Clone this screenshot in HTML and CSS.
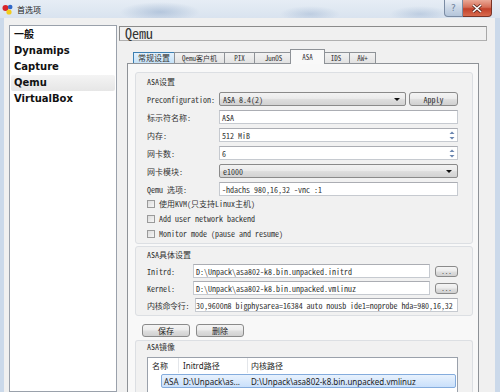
FILE: index.html
```html
<!DOCTYPE html>
<html>
<head>
<meta charset="utf-8">
<link rel="stylesheet" href="styles.css">
</head>
<body>
<div class="window">
  <div class="titlebar">
    <svg class="app-icon" width="12" height="12" viewBox="0 0 12 12">
      <circle cx="3.5" cy="5" r="3" fill="#d8262a"/>
      <circle cx="8.2" cy="4" r="2.3" fill="#2f67c9"/>
      <circle cx="7" cy="9" r="2.6" fill="#f3cc1c"/>
    </svg>
    <span class="title">首选项</span>
    <div class="caption">
      <div class="cap-help">?</div>
      <div class="cap-close">
        <svg width="12" height="9" viewBox="0 0 12 9"><path d="M2 1 L10 8 M10 1 L2 8" stroke="#5a2a22" stroke-width="3"/><path d="M2 1 L10 8 M10 1 L2 8" stroke="#fff" stroke-width="1.6"/></svg>
      </div>
    </div>
  </div>
  <div class="frame">
    <ul class="nav">
      <li>一般</li>
      <li>Dynamips</li>
      <li>Capture</li>
      <li class="sel">Qemu</li>
      <li>VirtualBox</li>
    </ul>
    <div class="main">
      <div class="header">Qemu</div>
      <div class="tabs">
        <div class="tabbar">
          <div class="tab hover w1">常规设置</div>
          <div class="tab w2">Qemu客户机</div>
          <div class="tab w3">PIX</div>
          <div class="tab w4">JunOS</div>
          <div class="tab active">ASA</div>
          <div class="tab w6">IDS</div>
          <div class="tab w7">AW+</div>
        </div>
        <div class="pane">
          <div class="group g1">
            <div class="gtitle">ASA设置</div>
            <div class="row first">
              <span class="lbl">Preconfiguration:</span>
              <div class="combo narrow"><span>ASA 8.4(2)</span><i class="arrow"></i></div>
              <div class="btn apply">Apply</div>
            </div>
            <div class="row">
              <span class="lbl">标示符名称:</span>
              <div class="field">ASA</div>
            </div>
            <div class="row">
              <span class="lbl">内存:</span>
              <div class="field spin">512 MiB<span class="spinner"><svg width="8" height="11" viewBox="0 0 8 11"><path d="M1.5 4 L4 1.5 L6.5 4 Z" fill="#6a86b0"/><path d="M1.5 7 L4 9.5 L6.5 7 Z" fill="#6a86b0"/></svg></span></div>
            </div>
            <div class="row">
              <span class="lbl">网卡数:</span>
              <div class="field spin">6<span class="spinner"><svg width="8" height="11" viewBox="0 0 8 11"><path d="M1.5 4 L4 1.5 L6.5 4 Z" fill="#6a86b0"/><path d="M1.5 7 L4 9.5 L6.5 7 Z" fill="#6a86b0"/></svg></span></div>
            </div>
            <div class="row">
              <span class="lbl">网卡模块:</span>
              <div class="combo"><span>e1000</span><i class="arrow"></i></div>
            </div>
            <div class="row">
              <span class="lbl">Qemu 选项:</span>
              <div class="field">-hdachs 980,16,32 -vnc :1</div>
            </div>
            <div class="check"><span class="box"></span>使用KVM(只支持Linux主机)</div>
            <div class="check"><span class="box"></span>Add user network backend</div>
            <div class="check"><span class="box"></span>Monitor mode (pause and resume)</div>
          </div>
          <div class="group g2">
            <div class="gtitle">ASA具体设置</div>
            <div class="row r2">
              <span class="lbl2">Initrd:</span>
              <div class="field">D:\Unpack\asa802-k8.bin.unpacked.initrd</div>
              <div class="btn dots">...</div>
            </div>
            <div class="row r2">
              <span class="lbl2">Kernel:</span>
              <div class="field">D:\Unpack\asa802-k8.bin.unpacked.vmlinuz</div>
              <div class="btn dots">...</div>
            </div>
            <div class="row r2">
              <span class="lbl3">内核命令行:</span>
              <div class="field tight">30,9600n8 bigphysarea=16384 auto nousb ide1=noprobe hda=980,16,32</div>
            </div>
          </div>
          <div class="buttons">
            <div class="btn big">保存</div>
            <div class="btn big">删除</div>
          </div>
          <div class="group g3">
            <div class="gtitle">ASA镜像</div>
            <div class="table">
              <div class="thead">
                <span class="c1">名称</span>
                <span class="c2">Initrd路径</span>
                <span class="c3">内核路径</span>
              </div>
              <div class="trow">
                <span class="c1">ASA</span>
                <span class="c2">D:\Unpack\as...</span>
                <span class="c3">D:\Unpack\asa802-k8.bin.unpacked.vmlinuz</span>
              </div>
            </div>
          </div>
        </div>
      </div>
    </div>
  </div>
</div>
</body>
</html>
```
FILE: styles.css
```css
* { box-sizing: border-box; }
html, body { margin: 0; padding: 0; }
body {
  width: 500px;
  height: 392px;
  overflow: hidden;
  background: #f0f0f0;
  font-family: "Noto Sans Mono CJK SC", "Liberation Mono", "Noto Sans CJK SC", monospace;
  font-size: 8px;
  color: #1a1a1a;
}
.window {
  width: 500px;
  height: 392px;
  display: flex;
  flex-direction: column;
}
.titlebar {
  height: 18px;
  flex: none;
  display: flex;
  align-items: center;
  position: relative;
  background:
    radial-gradient(ellipse 40px 10px at 160px 12px, rgba(120,150,190,0.4), transparent),
    radial-gradient(ellipse 30px 8px at 310px 14px, rgba(120,150,190,0.3), transparent),
    radial-gradient(ellipse 30px 8px at 420px 14px, rgba(120,150,190,0.3), transparent),
    linear-gradient(180deg, #e6edf5 0%, #d9e3ef 100%);
}
.app-icon { margin-left: 2px; }
.title {
  margin-left: 3px;
  font-family: "Noto Sans CJK SC", sans-serif;
  font-size: 8px;
  color: #222;
}
.caption {
  position: absolute;
  right: 8px;
  top: 0;
  display: flex;
}
.cap-help {
  width: 19px;
  height: 17px;
  border: 1px solid #7a8ba3;
  border-top: none;
  border-radius: 0 0 0 4px;
  background: linear-gradient(180deg, #e8eef6 0%, #cbd7e6 50%, #b4c5da 100%);
  color: #6c7e98;
  font-family: "DejaVu Sans", sans-serif;
  font-size: 9px;
  display: flex;
  align-items: center;
  justify-content: center;
}
.cap-close {
  width: 29px;
  height: 17px;
  border: 1px solid #7a3427;
  border-top: none;
  border-left: none;
  border-radius: 0 0 4px 0;
  background: linear-gradient(180deg, #eaa896 0%, #d66e57 45%, #c2412a 55%, #d86a4e 100%);
  display: flex;
  align-items: center;
  justify-content: center;
}
.frame {
  flex: 1;
  display: flex;
  padding: 7px 0 0 5px;
  border-left: 4px solid #cbd9ea;
  border-right: 5px solid #cbd9ea;
  min-height: 0;
}
.nav {
  list-style: none;
  margin: 0;
  padding: 1px 1px 0 1px;
  width: 108px;
  flex: none;
  background: #fff;
  border: 1px solid #9aa1ab;
  font-family: "DejaVu Sans", "Noto Sans CJK SC", sans-serif;
  font-weight: bold;
  font-size: 10px;
  color: #111;
}
.nav li {
  height: 16px;
  line-height: 16px;
  padding-left: 3px;
}
.nav li.sel {
  background: linear-gradient(180deg, #f4f4f4 0%, #e6e6e6 100%);
  border-radius: 2px;
}
.main {
  flex: none;
  width: 368px;
  margin-left: 2px;
  padding-top: 1px;
  display: flex;
  flex-direction: column;
}
.header {
  height: 15px;
  border: 1px solid #8b8b8b;
  border-right-color: #a8a8a8;
  border-bottom-color: #b0b0b0;
  font-size: 14px;
  line-height: 13px;
  padding-left: 5px;
  color: #333;
}
.tabs {
  margin-top: 8px;
  margin-left: 8px;
  width: 352px;
  flex: 1;
  display: flex;
  flex-direction: column;
}
.tabbar {
  display: flex;
  align-items: flex-end;
  height: 14px;
  padding-left: 6px;
  position: relative;
  z-index: 2;
}
.tab {
  height: 11px;
  border: 1px solid #8e9297;
  border-bottom: none;
  background: linear-gradient(180deg, #f2f2f2 0%, #e2e2e2 100%);
  display: flex;
  align-items: center;
  justify-content: center;
  font-size: 7px;
  line-height: 8px;
  margin-right: -1px;
  color: #333;
}
.tab.hover {
  background: linear-gradient(180deg, #e3f1fc 0%, #c5e2f8 100%);
  border-color: #3c7fb1;
  font-size: 8px;
}
.w1 { width: 42px; }
.w2 { width: 51px; }
.w3 { width: 31px; }
.w4 { width: 39px; }
.w6 { width: 28px; }
.w7 { width: 27px; }
.tab.active {
  width: 35px;
  height: 15px;
  margin-left: -2px;
  margin-right: -3px;
  margin-bottom: -1px;
  background: #f9f9f9;
  position: relative;
  z-index: 3;
}
.pane {
  flex: 1;
  border: 1px solid #8e9297;
  border-bottom: none;
  background: #f8f8f8;
  padding: 8px 5px 0 7px;
}
.group {
  border: 1px solid #dcdfe3;
  border-radius: 3px;
  background: #f1f1f1;
  padding: 0 14px 0 11px;
  color: #333;
}
.g1 { padding-top: 2px; padding-bottom: 2px; }
.g2 { margin-top: 2px; padding-top: 1px; padding-bottom: 3px; }
.g3 { margin-top: 3px; padding-top: 0; height: 60px; border-bottom: none; }
.gtitle {
  height: 13px;
  line-height: 13px;
}
.g3 .gtitle { height: 11px; line-height: 11px; }
.row {
  display: flex;
  align-items: center;
  height: 14px;
  margin-top: 4px;
}
.row.r2 { margin-top: 3px; }
.lbl { width: 72px; flex: none; }
.lbl2 { width: 46px; flex: none; }
.lbl3 { width: 48px; flex: none; white-space: nowrap; letter-spacing: -0.3px; }
.field {
  flex: 1;
  height: 14px;
  background: #fff;
  border: 1px solid #c6cad0;
  border-top-color: #abadb3;
  padding-left: 2px;
  display: flex;
  align-items: center;
  white-space: nowrap;
  position: relative;
  min-width: 0;
}
.field.tight { padding-left: 0; letter-spacing: -0.05px; }
.spinner {
  position: absolute;
  right: 1px;
  top: 1px;
}
.combo {
  flex: 1;
  height: 14px;
  border: 1px solid #8a8a8a;
  border-radius: 2px;
  background: linear-gradient(180deg, #f3f3f3 0%, #ebebeb 45%, #dddddd 55%, #d2d2d2 100%);
  display: flex;
  align-items: center;
  padding-left: 3px;
  justify-content: space-between;
}
.combo.narrow { flex: none; width: 187px; }
.arrow {
  width: 0;
  height: 0;
  border-left: 3px solid transparent;
  border-right: 3px solid transparent;
  border-top: 3px solid #111;
  margin-right: 5px;
}
.btn {
  height: 14px;
  border: 1px solid #8a8a8a;
  border-radius: 3px;
  background: linear-gradient(180deg, #f4f4f4 0%, #ececec 45%, #dedede 55%, #d0d0d0 100%);
  display: flex;
  align-items: center;
  justify-content: center;
  flex: none;
}
.apply { width: 49px; margin-left: 3px; }
.dots { width: 23px; height: 11px; margin-left: 5px; font-size: 7px; color: #444; }
.check {
  height: 15px;
  display: flex;
  align-items: center;
}
.box {
  width: 8px;
  height: 8px;
  border: 1px solid #9a9a9a;
  background: linear-gradient(135deg, #dcdcdc 0%, #f6f6f6 100%);
  margin-right: 4px;
}
.buttons {
  display: flex;
  gap: 6px;
  margin-top: 8px;
  margin-left: 7px;
}
.big { width: 48px; height: 13px; }
.table {
  margin-top: 5px;
  background: #fff;
  border: 1px solid #9aa1ab;
  height: 40px;
  font-family: "Noto Sans", "Noto Sans CJK SC", sans-serif;
  font-size: 8px;
  color: #222;
}
.thead {
  display: flex;
  height: 15px;
  align-items: center;
}
.thead span {
  height: 15px;
  display: flex;
  align-items: center;
  border-right: 1px solid #e3e6ea;
}
.thead .c1 { width: 31px; padding-left: 4px; }
.thead .c2 { width: 69px; padding-left: 4px; }
.thead .c3 { flex: 1; padding-left: 3px; border-right: none; }
.trow {
  display: flex;
  align-items: center;
  height: 14px;
  margin-top: 1px;
  margin-left: 13px;
  margin-right: 1px;
  border: 1px solid #84acdd;
  border-radius: 2px;
  background: linear-gradient(180deg, #e8f2fd 0%, #c9e0fb 100%);
  white-space: nowrap;
}
.trow .c1 { width: 17px; padding-left: 2px; }
.trow .c2 { width: 69px; padding-left: 4px; }
.trow .c3 { flex: 1; padding-left: 3px; }
```
